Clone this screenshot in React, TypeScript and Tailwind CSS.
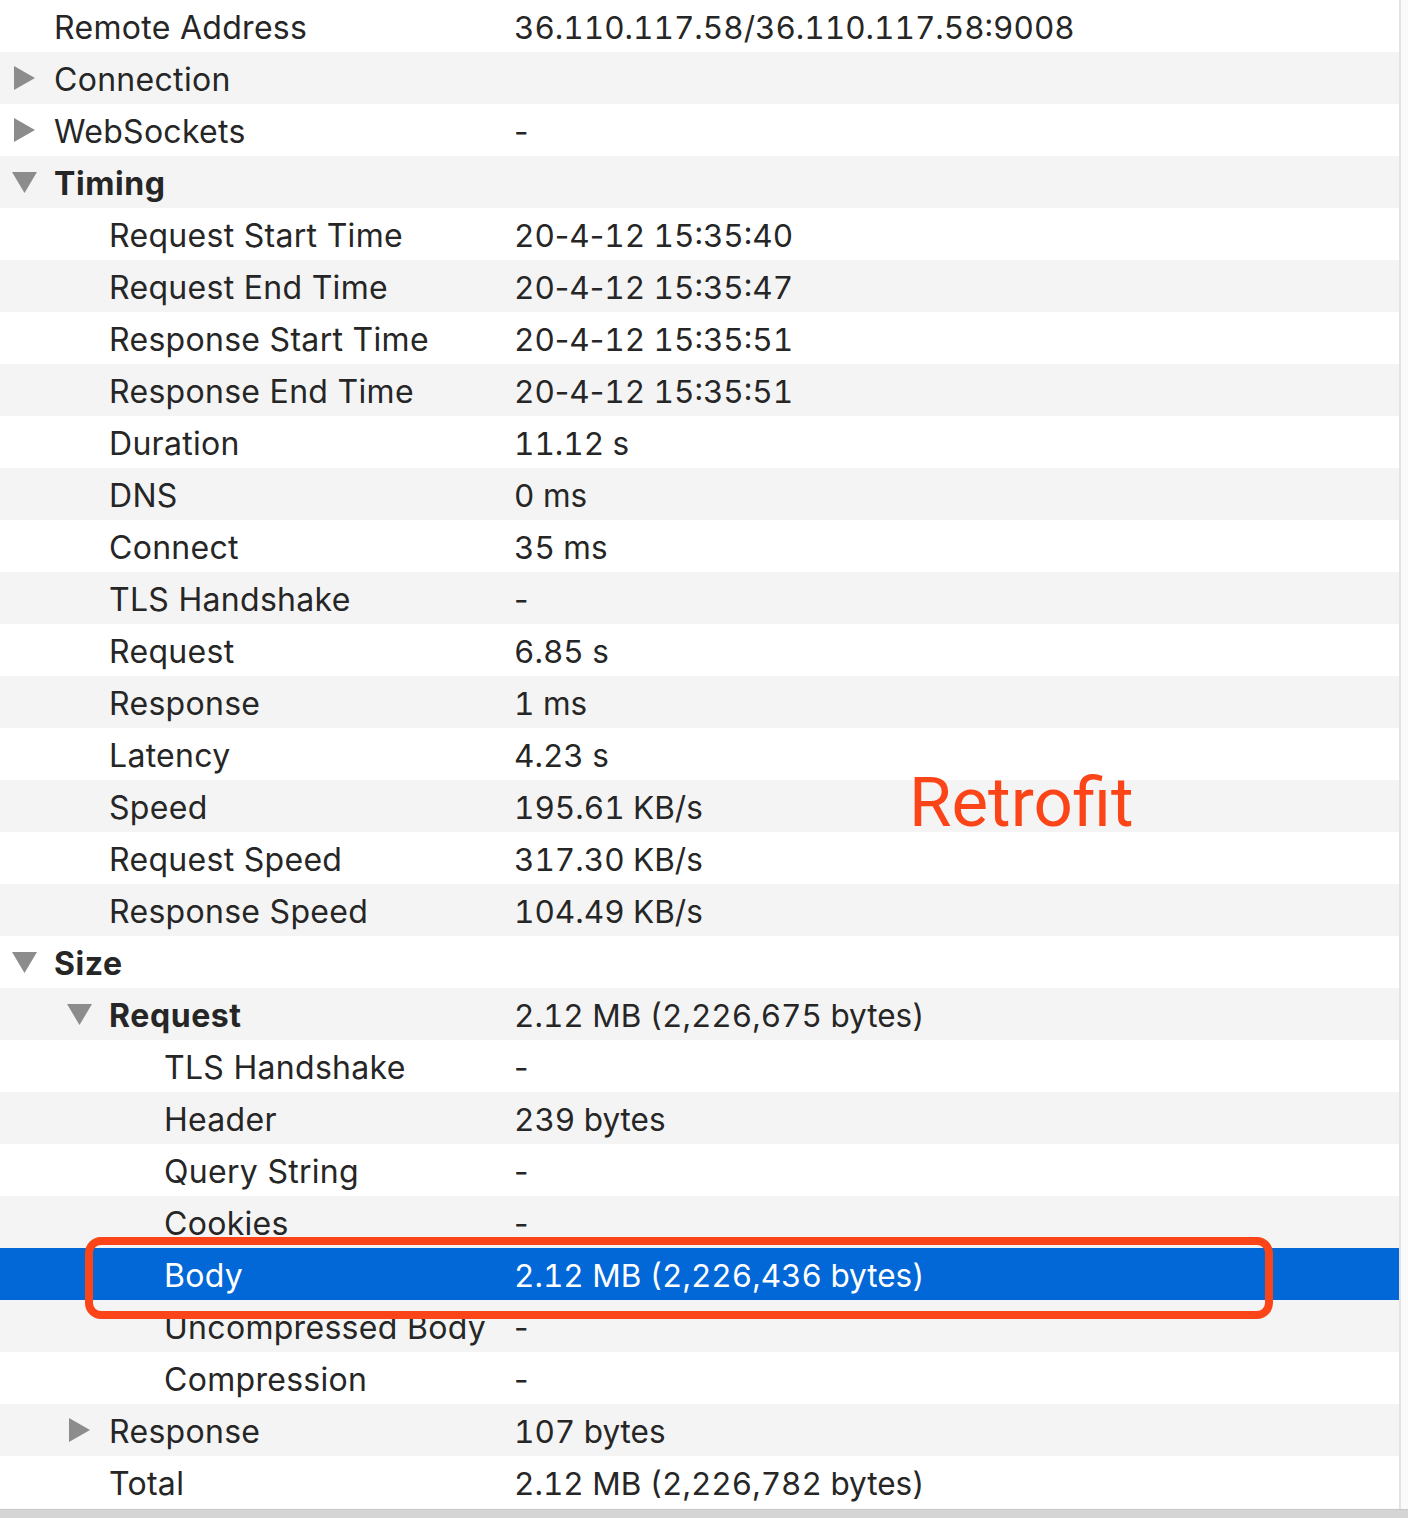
import React from 'react';

type Row = {
  label: string;
  value?: string;
  level?: number;
  arrow?: 'right' | 'down';
  bold?: boolean;
  selected?: boolean;
};

const rows: Row[] = [
  { label: 'Remote Address', value: '36.110.117.58/36.110.117.58:9008' },
  { label: 'Connection', arrow: 'right' },
  { label: 'WebSockets', value: '-', arrow: 'right' },
  { label: 'Timing', arrow: 'down', bold: true },
  { label: 'Request Start Time', value: '20-4-12 15:35:40', level: 1 },
  { label: 'Request End Time', value: '20-4-12 15:35:47', level: 1 },
  { label: 'Response Start Time', value: '20-4-12 15:35:51', level: 1 },
  { label: 'Response End Time', value: '20-4-12 15:35:51', level: 1 },
  { label: 'Duration', value: '11.12 s', level: 1 },
  { label: 'DNS', value: '0 ms', level: 1 },
  { label: 'Connect', value: '35 ms', level: 1 },
  { label: 'TLS Handshake', value: '-', level: 1 },
  { label: 'Request', value: '6.85 s', level: 1 },
  { label: 'Response', value: '1 ms', level: 1 },
  { label: 'Latency', value: '4.23 s', level: 1 },
  { label: 'Speed', value: '195.61 KB/s', level: 1 },
  { label: 'Request Speed', value: '317.30 KB/s', level: 1 },
  { label: 'Response Speed', value: '104.49 KB/s', level: 1 },
  { label: 'Size', arrow: 'down', bold: true },
  { label: 'Request', value: '2.12 MB (2,226,675 bytes)', level: 1, arrow: 'down', bold: true },
  { label: 'TLS Handshake', value: '-', level: 2 },
  { label: 'Header', value: '239 bytes', level: 2 },
  { label: 'Query String', value: '-', level: 2 },
  { label: 'Cookies', value: '-', level: 2 },
  { label: 'Body', value: '2.12 MB (2,226,436 bytes)', level: 2, selected: true },
  { label: 'Uncompressed Body', value: '-', level: 2 },
  { label: 'Compression', value: '-', level: 2 },
  { label: 'Response', value: '107 bytes', level: 1, arrow: 'right' },
  { label: 'Total', value: '2.12 MB (2,226,782 bytes)', level: 1 },
];

const indent = ['pl-[14px]', 'pl-[69px]', 'pl-[124px]'];

const Arrow: React.FC<{ dir: 'right' | 'down'; selected?: boolean }> = ({ dir, selected }) => {
  const fill = selected ? '#ffffff' : '#8c8c8c';
  if (dir === 'right') {
    return (
      <svg width="21" height="24" viewBox="0 0 21 24" className="shrink-0">
        <polygon points="0,0 21,12 0,24" fill={fill} />
      </svg>
    );
  }
  return (
    <svg width="25" height="21" viewBox="0 0 25 21" className="shrink-0 -ml-[2px]">
      <polygon points="0,0 25,0 12.5,21" fill={fill} />
    </svg>
  );
};

// digits tabular like the mac font, hyphens kept narrow
const Value: React.FC<{ text?: string }> = ({ text }) => {
  if (!text) return null;
  const parts = text.split('-');
  return (
    <span className="whitespace-nowrap text-[31.5px] tabular-nums">
      {parts.map((p, i) => (
        <React.Fragment key={i}>
          {i > 0 && <span className="normal-nums">-</span>}
          {p}
        </React.Fragment>
      ))}
    </span>
  );
};

export default function App() {
  return (
    <div
      className="relative w-[1408px] h-[1518px] overflow-hidden bg-[#fafafa] flex flex-col"
      style={{ fontFamily: 'Inter, "Liberation Sans", Arial, sans-serif' }}
    >
      <div className="flex flex-1">
        {/* detail rows */}
        <div className="w-[1399px] flex flex-col">
          {rows.map((r, i) => {
            const bg = r.selected ? 'bg-[#0267d7]' : i % 2 === 0 ? 'bg-white' : 'bg-[#f4f4f4]';
            const color = r.selected ? 'text-white' : 'text-[#262626]';
            return (
              <div
                key={i}
                className={`flex items-center h-[52px] pt-[4px] shrink-0 text-[32px] leading-none ${bg} ${color}`}
              >
                <div className={`w-[514px] shrink-0 flex items-center ${indent[r.level ?? 0]}`}>
                  <div className="w-[40px] shrink-0 flex items-center -mt-[4px]">
                    {r.arrow && <Arrow dir={r.arrow} selected={r.selected} />}
                  </div>
                  <span
                    className={`whitespace-nowrap ${r.bold ? 'font-bold tracking-[0.6px]' : 'tracking-[0.3px]'}`}
                  >
                    {r.label}
                  </span>
                </div>
                <Value text={r.value} />
              </div>
            );
          })}
        </div>
        <div className="flex-1 border-l-2 border-[#e3e3e3] bg-[#fafafa]" />
      </div>
      <div className="h-[9px] shrink-0 bg-[#d5d5d5] border-t border-[#c9c9c9]" />

      {/* annotation overlays */}
      <div
        className="absolute left-[909px] top-[768px] text-[69px] leading-none text-[#fc4419]"
        style={{ fontFamily: 'Roboto, "Liberation Sans", sans-serif' }}
      >
        Retrofit
      </div>
      <div className="absolute left-[85px] top-[1237px] w-[1188px] h-[82px] border-[8px] border-[#fc4419] rounded-[16px]" />
    </div>
  );
}
